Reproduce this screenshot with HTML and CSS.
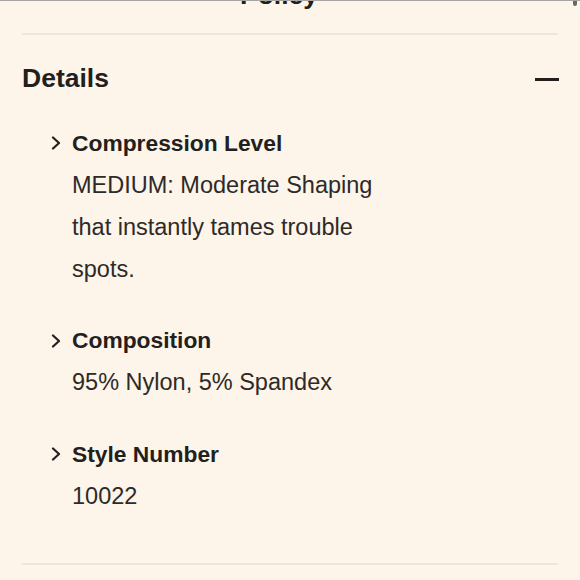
FILE: index.html
```html
<!DOCTYPE html>
<html lang="en">
<head>
<meta charset="utf-8">
<title>Details</title>
<link rel="stylesheet" href="styles.css">
</head>
<body>
<div class="page">
  <div class="scroll-thumb"></div>
  <div class="prev-section">
    <div class="prev-title">Policy</div>
  </div>
  <section class="details">
    <div class="details-header">
      <h2 class="details-title">Details</h2>
      <span class="minus"></span>
    </div>
    <ul class="detail-list">
      <li class="detail-item">
        <div class="detail-head">
          <svg class="chev" viewBox="0 0 10 14" width="10" height="14"><path d="M2 1.5 L8 7 L2 12.5" fill="none" stroke="#231f1c" stroke-width="2.2" stroke-linecap="round" stroke-linejoin="round"/></svg>
          <span class="detail-name">Compression Level</span>
        </div>
        <p class="detail-text">MEDIUM: Moderate Shaping<br>that instantly tames trouble<br>spots.</p>
      </li>
      <li class="detail-item">
        <div class="detail-head">
          <svg class="chev" viewBox="0 0 10 14" width="10" height="14"><path d="M2 1.5 L8 7 L2 12.5" fill="none" stroke="#231f1c" stroke-width="2.2" stroke-linecap="round" stroke-linejoin="round"/></svg>
          <span class="detail-name">Composition</span>
        </div>
        <p class="detail-text">95% Nylon, 5% Spandex</p>
      </li>
      <li class="detail-item">
        <div class="detail-head">
          <svg class="chev" viewBox="0 0 10 14" width="10" height="14"><path d="M2 1.5 L8 7 L2 12.5" fill="none" stroke="#231f1c" stroke-width="2.2" stroke-linecap="round" stroke-linejoin="round"/></svg>
          <span class="detail-name">Style Number</span>
        </div>
        <p class="detail-text">10022</p>
      </li>
    </ul>
  </section>
</div>
</body>
</html>
```

FILE: styles.css
```css
html, body {
  margin: 0;
  padding: 0;
  background: #fdf4ea;
}

body {
  font-family: "Liberation Sans", Arial, sans-serif;
  color: #231f1c;
}

.page {
  position: relative;
  width: 580px;
  height: 580px;
  overflow: hidden;
  border-top: 1px solid #a8a6a3;
  box-sizing: border-box;
  padding: 0 22px;
}

.scroll-thumb {
  position: absolute;
  top: -1px;
  right: 3px;
  width: 4px;
  height: 6px;
  border-radius: 0 0 2px 2px;
  background: #6a6764;
}

.prev-section {
  height: 32px;
  overflow: hidden;
  border-bottom: 2px solid #eee5db;
}

.prev-title {
  margin-top: -20.6px;
  margin-left: 218px;
  font-size: 26.5px;
  line-height: 30px;
  font-weight: 700;
  color: #231f1c;
}

.details {
  padding-top: 27px;
  padding-bottom: 46px;
  border-bottom: 2px solid #eee5db;
}

.details-header {
  display: flex;
  align-items: center;
  justify-content: space-between;
  height: 32px;
}

.details-title {
  margin: 0;
  font-size: 26.5px;
  line-height: 32px;
  font-weight: 700;
  color: #231f1c;
}

.minus {
  display: block;
  width: 24px;
  height: 3px;
  margin-top: 2px;
  margin-right: -1px;
  background: #231f1c;
}

.detail-list {
  list-style: none;
  margin: 27.6px 0 0;
  padding: 0;
}

.detail-item {
  margin-bottom: 29.5px;
}

.detail-item:last-child {
  margin-bottom: 0;
}

.detail-head {
  display: flex;
  align-items: center;
  gap: 11px;
  padding-left: 29px;
  height: 42px;
}

.chev {
  display: block;
  flex: none;
  margin-top: 1px;
}

.detail-name {
  font-size: 22.8px;
  line-height: 42px;
  font-weight: 700;
  color: #231f1c;
}

.detail-text {
  margin: 0;
  padding-left: 50px;
  font-size: 23.5px;
  line-height: 42px;
  color: #2e2a27;
}
```
